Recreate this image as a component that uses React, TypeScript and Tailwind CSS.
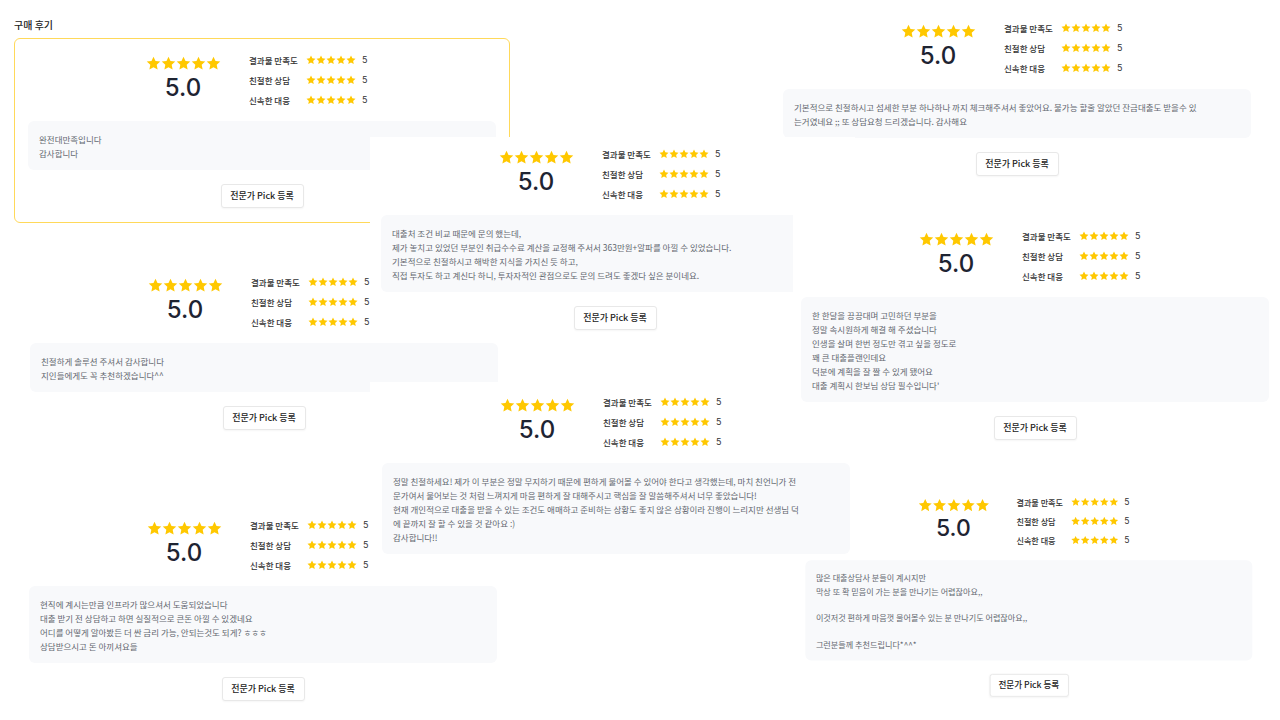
const font = { fontFamily: '"Noto Sans CJK KR", "Noto Sans", sans-serif' };

function Star({ size }: { size: number }) {
  return (
    <svg width={size} height={size} viewBox="0 0 24 24" className="shrink-0">
      <polygon
        fill="#ffc800"
        points="12,1.2 15.2,8 22.8,8.9 17.1,14.1 18.6,21.7 12,17.9 5.4,21.7 6.9,14.1 1.2,8.9 8.8,8"
      />
    </svg>
  );
}

function Stars({ size }: { size: number }) {
  return (
    <div className="flex">
      {[0, 1, 2, 3, 4].map((i) => (
        <Star key={i} size={size} />
      ))}
    </div>
  );
}

const rows = ["결과물 만족도", "친절한 상담", "신속한 대응"];

function Card({
  pos,
  text,
  bordered,
  noButton,
}: {
  pos: string;
  text: string;
  bordered?: boolean;
  noButton?: boolean;
}) {
  return (
    <div
      className={`absolute w-[496px] rounded-md border bg-white pt-[11px] pb-[14px] ${
        bordered ? "border-[#ffd95a]" : "border-transparent"
      } ${pos}`}
      style={font}
    >
      <div className="flex pl-[131px]">
        <div className="flex w-[74px] flex-col items-center">
          <div className="mt-[6px]">
            <Stars size={15} />
          </div>
          <div
            className="mt-[3px] text-[24px] font-medium leading-[28px] text-[#1e2432]"
            style={{ fontFamily: '"Inter", "Liberation Sans", sans-serif' }}
          >
            5.0
          </div>
        </div>
        <div className="ml-[29px] flex flex-col">
          {rows.map((r) => (
            <div key={r} className="flex h-5 items-center">
              <span className="w-[57px] text-[8.5px] font-medium text-[#333]">{r}</span>
              <Stars size={10} />
              <span
                className="ml-[6px] text-[9px] text-[#333]"
                style={{ fontFamily: '"Inter", "Liberation Sans", sans-serif' }}
              >
                5
              </span>
            </div>
          ))}
        </div>
      </div>
      <div className="mx-[13px] mt-[11px] whitespace-pre rounded-md bg-[#f8f9fb] px-[11px] pt-[11px] pb-[10px] text-[8.5px] leading-[14px] text-[#636870]">
        {text}
      </div>
      {!noButton && (
        <div className="mt-[14px] flex justify-center">
          <button className="flex h-6 w-[83px] items-center justify-center rounded-[3px] border border-[#e8e8e8] bg-white text-[9px] font-medium text-[#222] shadow-[0_1px_2px_rgba(0,0,0,0.04)]">
            전문가 Pick 등록
          </button>
        </div>
      )}
    </div>
  );
}

export default function App() {
  return (
    <div className="relative h-[720px] w-[1280px] overflow-hidden bg-white" style={font}>
      <div className="absolute left-[14px] top-[18px] text-[10px] font-medium leading-[14px] text-[#222]">
        구매 후기
      </div>
      <Card pos="left-[14px] top-[38px]" bordered text={"완전대만족입니다\n감사합니다"} />

      <Card
        pos="left-[769px] top-[6px]"
        text={
          "기본적으로 친절하시고 섬세한 부분 하나하나 까지 체크해주셔서 좋았어요. 불가능 할줄 알았던 잔금대출도 받을수 있\n는거였네요 ;; 또 상담요청 드리겠습니다. 감사해요"
        }
      />

      <Card pos="left-[16px] top-[260px]" text={"친절하게 솔루션 주셔서 감사합니다\n지인들에게도 꼭 추천하겠습니다^^"} />

      <Card
        pos="left-[15px] top-[503px]"
        text={
          "현직에 계시는만큼 인프라가 많으셔서 도움되었습니다\n대출 받기 전 상담하고 하면 실질적으로 큰돈 아낄 수 있겠네요\n어디를 어떻게 알아봤든 더 싼 금리 가능, 안되는것도 되게? ㅎㅎㅎ\n상담받으시고 돈 아끼셔요들"
        }
      />

      <div className="absolute left-[780px] top-[452px] h-[268px] w-[500px] overflow-hidden bg-white">
        <div className="absolute left-[12px] top-[29px] h-[260px] w-[500px] origin-top-left scale-[0.955]">
          <Card
            pos="left-0 top-0"
            text={
              "많은 대출상담사 분들이 계시지만\n막상 또 확 믿음이 가는 분을 만나기는 어렵잖아요,,\n\n이것저것 편하게 마음껏 물어볼수 있는 분 만나기도 어렵잖아요,,\n\n그런분들께 추천드립니다*^^*"
            }
          />
        </div>
      </div>

      <div className="absolute left-[370px] top-[137px] h-[200px] w-[485px] overflow-hidden bg-white">
        <Card
          pos="left-[-3px] top-[-5px]"
          text={
            "대출처 조건 비교 때문에 문의 했는데,\n제가 놓치고 있었던 부분인 취급수수료 계산을 교정해 주서서 363만원+알파를 아낄 수 있었습니다.\n기본적으로 친절하시고 해박한 지식을 가지신 듯 하고,\n직접 투자도 하고 계신다 하니, 투자자적인 관점으로도 문의 드려도 좋겠다 싶은 분이네요."
          }
        />
      </div>

      <div className="absolute left-[370px] top-[382px] h-[175px] w-[485px] overflow-hidden bg-white">
        <Card
          pos="left-[-2px] top-[-2px]"
          noButton
          text={
            "정말 친절하세요! 제가 이 부분은 정말 무지하기 때문에 편하게 물어볼 수 있어야 한다고 생각했는데, 마치 친언니가 전\n문가여서 물어보는 것 처럼 느껴지게 마음 편하게 잘 대해주시고 핵심을 잘 말씀해주셔서 너무 좋았습니다!\n현재 개인적으로 대출을 받을 수 있는 조건도 애매하고 준비하는 상황도 좋지 않은 상황이라 진행이 느리지만 선생님 덕\n에 끝까지 잘 할 수 있을 것 같아요 :)\n감사합니다!!"
          }
        />
      </div>

      <div className="absolute left-[793px] top-[215px] h-[232px] w-[487px] overflow-hidden bg-white">
        <Card
          pos="left-[-6px] top-[-1px]"
          text={
            "한 한달을 끙끙대며 고민하던 부분을\n정말 속시원하게 해결 해 주셨습니다\n인생을 살며 한번 정도만 겪고 싶을 정도로\n꽤 큰 대출플랜인데요\n덕분에 계획을 잘 짤 수 있게 됐어요\n대출 계획시 한보님 상담 필수입니다'"
          }
        />
      </div>
    </div>
  );
}
